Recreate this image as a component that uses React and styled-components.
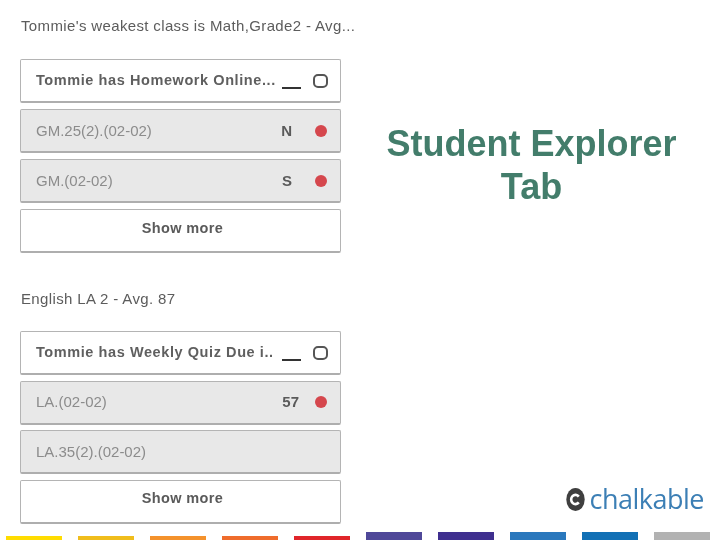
import React from "react";
import styled, { createGlobalStyle } from "styled-components";

const GlobalStyle = createGlobalStyle`
  html, body {
    margin: 0;
    padding: 0;
    background: #fff;
    font-family: "Liberation Sans", Arial, sans-serif;
  }
`;

const Page = styled.div`
  width: 720px;
  height: 540px;
  overflow: hidden;
  display: flex;
  flex-direction: column;
`;

const Main = styled.div`
  flex: 1;
  display: flex;
  min-height: 0;
`;

const LeftCol = styled.div`
  width: 321px;
  margin-left: 20px;
  padding-top: 18px;
`;

const Group = styled.section`
  margin-bottom: ${(p) => p.$gap || 0}px;
`;

const GroupTitle = styled.div`
  font-size: 15px;
  line-height: 16px;
  letter-spacing: 0.36px;
  color: #5c5c5c;
  margin: 0 0 ${(p) => p.$after}px 1px;
  white-space: nowrap;
  filter: blur(0.4px);
`;

const Rows = styled.div`
  display: flex;
  flex-direction: column;
  gap: ${(p) => p.$gap}px;
`;

const Row = styled.div`
  box-sizing: border-box;
  height: 44px;
  display: flex;
  align-items: center;
  padding: 0 12px 0 15px;
  border: 1px solid #b4b4b4;
  border-bottom: 2px solid #aeaeae;
  border-radius: 2px;
  background: ${(p) => (p.$grey ? "#e8e8e8" : "#fff")};
`;

const Name = styled.span`
  flex: 1;
  font-size: ${(p) => (p.$bold ? 14.5 : 15)}px;
  letter-spacing: ${(p) => (p.$bold ? "0.58px" : "0")};
  font-weight: ${(p) => (p.$bold ? 700 : 400)};
  color: ${(p) => (p.$bold ? "#5f5f5f" : "#8c8c8c")};
  white-space: nowrap;
  margin-top: -1px;
  filter: blur(0.4px);
`;

const Score = styled.span`
  font-size: 15px;
  font-weight: 700;
  color: #5a5a5a;
  margin-right: ${(p) => p.$right}px;
  margin-top: -1px;
  filter: blur(0.35px);
`;

const Dash = styled.span`
  width: 19px;
  height: 2px;
  background: #333;
  margin: 14px 12px 0 0;
`;

const Box = styled.span`
  box-sizing: border-box;
  width: 15px;
  height: 14px;
  border: 2px solid #555;
  border-radius: 5px;
`;

const Dot = styled.span`
  width: 12px;
  height: 12px;
  margin: 0 1px 0 0;
  border-radius: 50%;
  background: #d5474d;
`;

const MoreRow = styled(Row)`
  justify-content: center;
  padding: 0 0 6px 4px;
`;

const MoreText = styled.span`
  font-size: 14.5px;
  font-weight: 700;
  letter-spacing: 0.35px;
  color: #5a5a5a;
  filter: blur(0.4px);
`;

const RightCol = styled.div`
  flex: 1;
  display: flex;
  flex-direction: column;
  justify-content: space-between;
  padding-top: 122px;
`;

const Heading = styled.h1`
  margin: 0 0 0 2px;
  text-align: center;
  font-size: 36px;
  line-height: 43px;
  font-weight: 700;
  color: #437d6b;
  filter: blur(0.3px);
`;

const Logo = styled.div`
  display: flex;
  align-items: center;
  justify-content: flex-end;
  gap: 5px;
  padding: 0 16px 19px 0;
`;

const LogoText = styled.span`
  font-family: "Open Sans", sans-serif;
  font-size: 27px;
  line-height: 28px;
  letter-spacing: -0.5px;
  color: #3c7fb5;
  filter: blur(0.3px);
`;

const Strip = styled.div`
  height: 8px;
  display: flex;
  align-items: flex-end;
  gap: 16px;
  padding-left: 6px;
`;

const Stripe = styled.div`
  width: 56px;
  height: ${(p) => p.$h}px;
  background: ${(p) => p.$color};
`;

const stripes = [
  { color: "#ffdc00", h: 4 },
  { color: "#f0bd1c", h: 4 },
  { color: "#f4922c", h: 4 },
  { color: "#ef6c2c", h: 4 },
  { color: "#e0252a", h: 4 },
  { color: "#4f4899", h: 8 },
  { color: "#3f2f8f", h: 8 },
  { color: "#2a78bd", h: 8 },
  { color: "#1270b5", h: 8 },
  { color: "#b2b2b2", h: 8 },
];

const LogoMark = () => (
  <svg width="19" height="25" viewBox="0 0 19 25">
    <ellipse cx="9.5" cy="12.5" rx="9.2" ry="11.5" fill="#3f3f3f" />
    <path d="M12.8 9.6 A4.3 4.6 0 1 0 12.8 15.4" fill="none" stroke="#fff" strokeWidth="2.6" />
  </svg>
);

const groups = [
  {
    title: "Tommie's weakest class is Math,Grade2 - Avg...",
    after: 25,
    gap: 38,
    rowGap: 6,
    item: "Tommie has Homework Online...",
    rows: [
      { name: "GM.25(2).(02-02)", score: "N", right: 23 },
      { name: "GM.(02-02)", score: "S", right: 23 },
    ],
  },
  {
    title: "English LA 2 - Avg. 87",
    after: 24,
    gap: 0,
    rowGap: 5.5,
    item: "Tommie has Weekly Quiz Due i..",
    rows: [
      { name: "LA.(02-02)", score: "57", right: 16 },
      { name: "LA.35(2).(02-02)" },
    ],
  },
];

const App = () => {
  return (
    <Page>
      <GlobalStyle />
      <Main>
        <LeftCol>
          {groups.map((g) => (
            <Group key={g.title} $gap={g.gap}>
              <GroupTitle $after={g.after}>{g.title}</GroupTitle>
              <Rows $gap={g.rowGap}>
                <Row>
                  <Name $bold>{g.item}</Name>
                  <Dash />
                  <Box />
                </Row>
                {g.rows.map((r) => (
                  <Row $grey key={r.name}>
                    <Name>{r.name}</Name>
                    {r.score && <Score $right={r.right}>{r.score}</Score>}
                    {r.score && <Dot />}
                  </Row>
                ))}
                <MoreRow>
                  <MoreText>Show more</MoreText>
                </MoreRow>
              </Rows>
            </Group>
          ))}
        </LeftCol>
        <RightCol>
          <Heading>
            Student Explorer
            <br />
            Tab
          </Heading>
          <Logo>
            <LogoMark />
            <LogoText>chalkable</LogoText>
          </Logo>
        </RightCol>
      </Main>
      <Strip>
        {stripes.map((s) => (
          <Stripe key={s.color} $color={s.color} $h={s.h} />
        ))}
      </Strip>
    </Page>
  );
};

export default App;
